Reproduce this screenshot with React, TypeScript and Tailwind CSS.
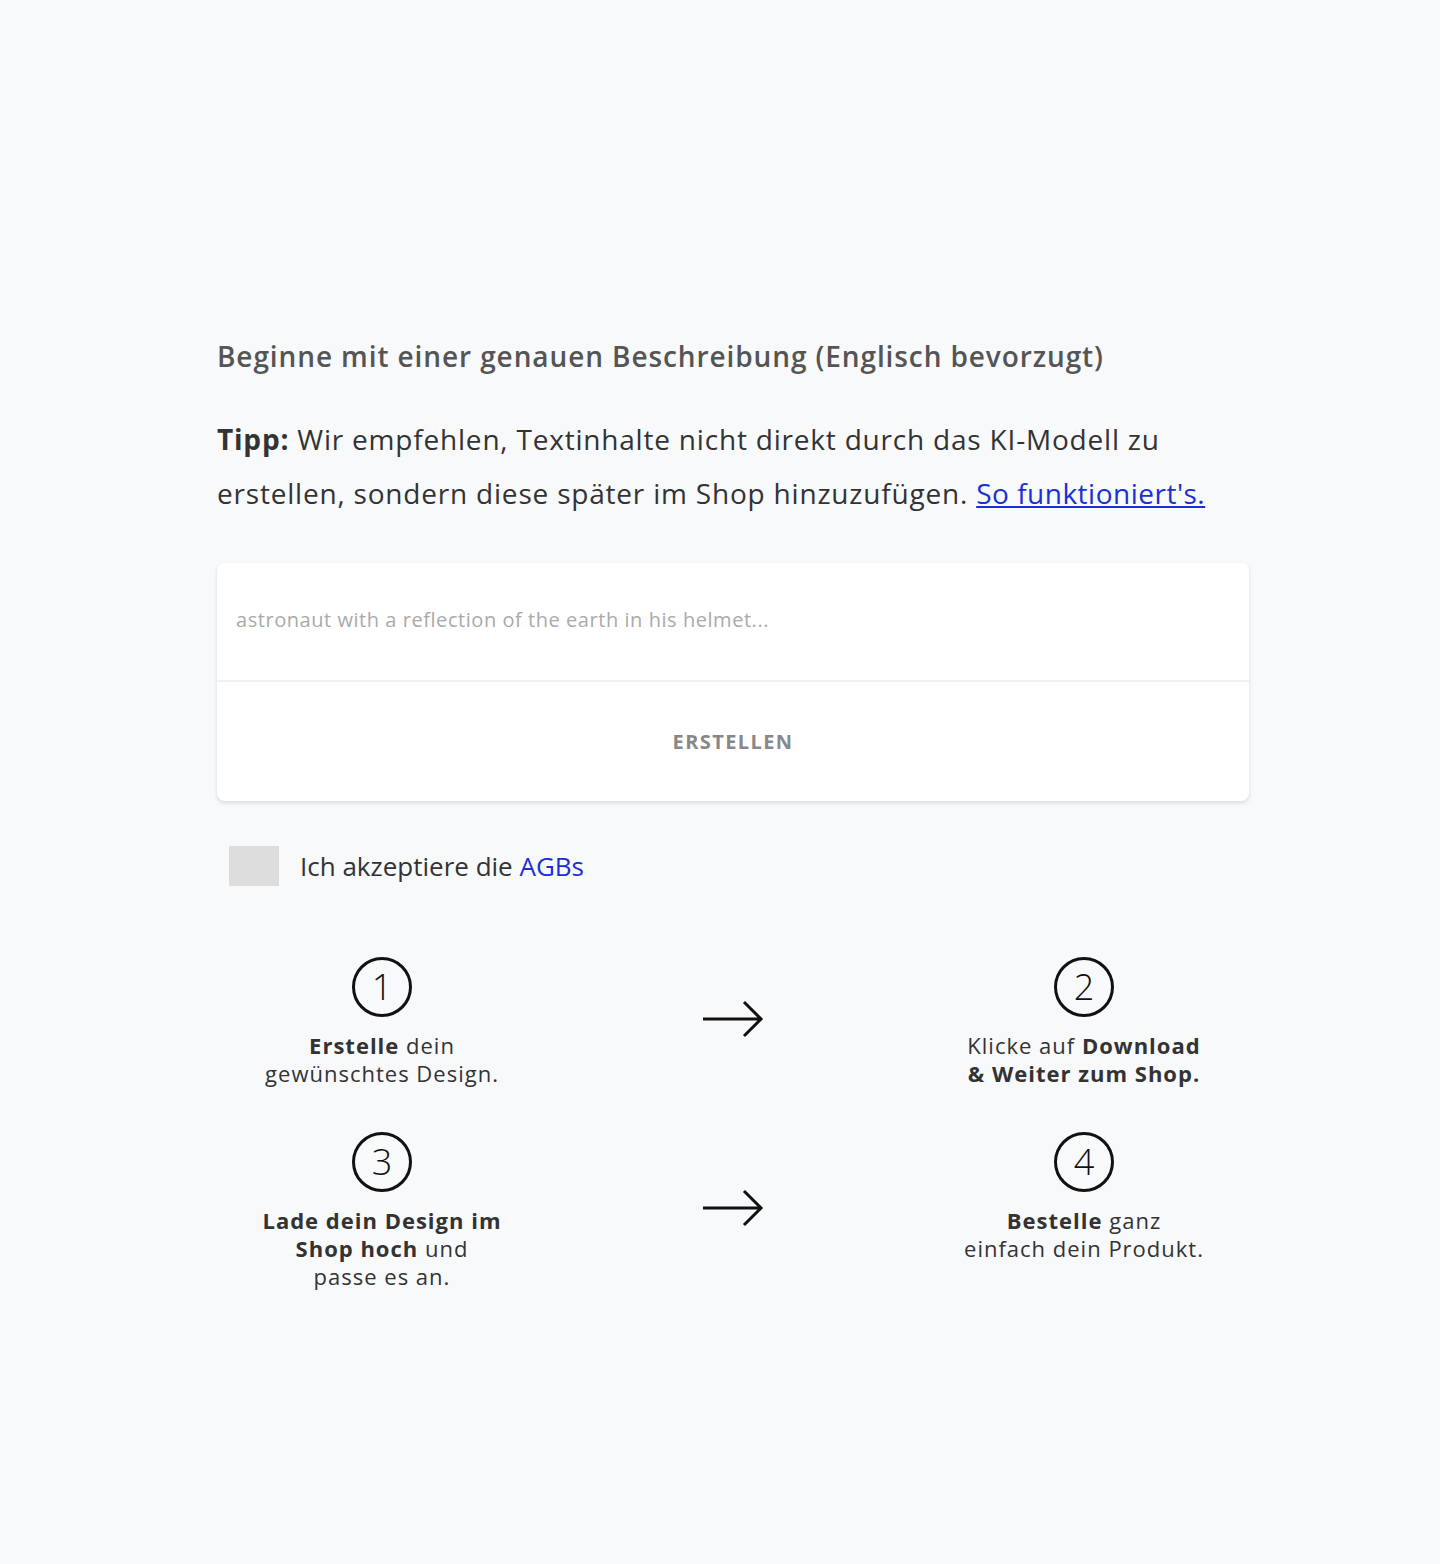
import React from "react";

function Circle({ n }: { n: string }) {
  return (
    <div className="flex h-[60px] w-[60px] items-center justify-center rounded-full border-[3px] border-[#111] text-[36px] font-light leading-none text-[#111]">
      {n}
    </div>
  );
}

function Arrow() {
  return (
    <svg width="62" height="40" viewBox="0 0 62 40" fill="none">
      <path d="M1 20 H59 M42 3 L59 20 L42 37" stroke="#111" strokeWidth="3" />
    </svg>
  );
}

function Step({ n, children }: { n: string; children: React.ReactNode }) {
  return (
    <div className="flex flex-col items-center">
      <Circle n={n} />
      <p className="mt-[14px] text-center text-[22px] leading-[28px] tracking-[1px] text-[#333]">{children}</p>
    </div>
  );
}

export default function App() {
  return (
    <div className="min-h-[1564px] bg-[#f8f9fb] font-['Open_Sans',sans-serif]">
      <div className="ml-[217px] w-[1032px] pt-[336px]">
        <h1 className="text-[28px] font-semibold leading-[40px] tracking-[0.9px] text-[#555]">
          Beginne mit einer genauen Beschreibung (Englisch bevorzugt)
        </h1>
        <p className="mt-[36px] text-[28px] leading-[54px] tracking-[0.8px] text-[#333]">
          <b className="font-bold">Tipp:</b> Wir empfehlen, Textinhalte nicht direkt durch das KI-Modell zu
          <br />
          erstellen, sondern diese später im Shop hinzuzufügen.{" "}
          <a className="tracking-[0.5px] text-[#1a2fd6] underline" href="#">
            So funktioniert's.
          </a>
        </p>
        <div className="mt-[43px] overflow-hidden rounded-[8px] bg-white shadow-[0_2px_4px_rgba(0,0,0,0.12)]">
          <div className="flex h-[119px] items-center border-b-2 border-[#f1f1f1] px-[19px] pb-[4px]">
            <span className="text-[20px] tracking-[0.55px] text-[#aaa]">
              astronaut with a reflection of the earth in his helmet...
            </span>
          </div>
          <div className="flex h-[119px] items-center justify-center">
            <span className="text-[20px] font-bold tracking-[1.4px] text-[#888]">ERSTELLEN</span>
          </div>
        </div>
        <div className="mt-[45px] flex items-center pl-[12px]">
          <div className="h-[40px] w-[50px] bg-[#ddd]" />
          <span className="ml-[21px] text-[26px] text-[#333]">
            Ich akzeptiere die <span className="text-[#1a2fd6]">AGBs</span>
          </span>
        </div>
        <div className="mt-[71px] grid grid-cols-[330px_1fr_330px] gap-y-[45px]">
          <Step n="1">
            <b className="font-bold">Erstelle</b> dein
            <br />
            gewünschtes Design.
          </Step>
          <div className="flex justify-center pt-[42px]">
            <Arrow />
          </div>
          <Step n="2">
            Klicke auf <b className="font-bold">Download</b>
            <br />
            <b className="font-bold">& Weiter zum Shop.</b>
          </Step>
          <Step n="3">
            <b className="font-bold">Lade dein Design im</b>
            <br />
            <b className="font-bold">Shop hoch</b> und
            <br />
            passe es an.
          </Step>
          <div className="flex justify-center pt-[56px]">
            <Arrow />
          </div>
          <Step n="4">
            <b className="font-bold">Bestelle</b> ganz
            <br />
            einfach dein Produkt.
          </Step>
        </div>
      </div>
    </div>
  );
}
